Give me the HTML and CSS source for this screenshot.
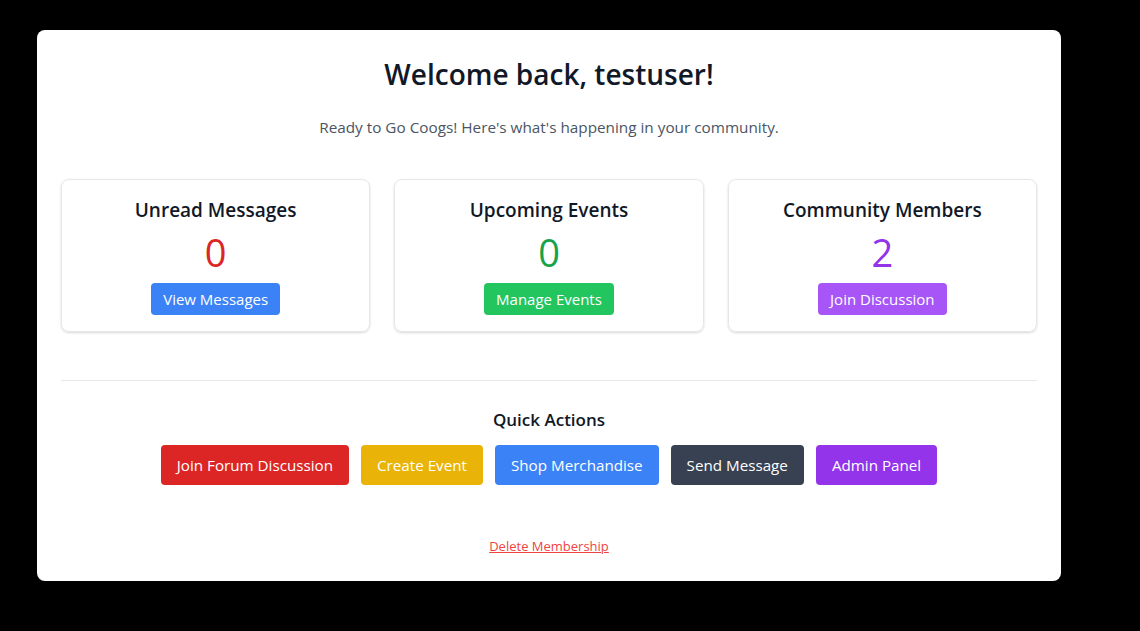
FILE: index.html
```html
<!DOCTYPE html>
<html lang="en">
<head>
<meta charset="utf-8">
<title>Dashboard</title>
<link rel="stylesheet" href="styles.css">
</head>
<body>
<div class="page">
  <main class="panel">
    <h1 class="title">Welcome back, testuser!</h1>
    <p class="subtitle">Ready to Go Coogs! Here's what's happening in your community.</p>

    <section class="stats">
      <div class="stat">
        <h2 class="stat-title">Unread Messages</h2>
        <div class="stat-num num-red">0</div>
        <a class="btn-sm bg-blue" href="#">View Messages</a>
      </div>
      <div class="stat">
        <h2 class="stat-title">Upcoming Events</h2>
        <div class="stat-num num-green">0</div>
        <a class="btn-sm bg-green" href="#">Manage Events</a>
      </div>
      <div class="stat">
        <h2 class="stat-title">Community Members</h2>
        <div class="stat-num num-purple">2</div>
        <a class="btn-sm bg-purple-light" href="#">Join Discussion</a>
      </div>
    </section>

    <section class="quick">
      <h3 class="quick-title">Quick Actions</h3>
      <div class="quick-row">
        <a class="btn bg-red" href="#">Join Forum Discussion</a>
        <a class="btn bg-yellow" href="#">Create Event</a>
        <a class="btn bg-blue" href="#">Shop Merchandise</a>
        <a class="btn bg-gray" href="#">Send Message</a>
        <a class="btn bg-purple" href="#">Admin Panel</a>
      </div>
    </section>

    <div class="delete-wrap">
      <a class="delete" href="#">Delete Membership</a>
    </div>
  </main>
</div>
</body>
</html>
```

FILE: styles.css
```css
* { box-sizing: border-box; }
html, body {
  margin: 0;
  padding: 0;
  background: #000;
  height: 100%;
}
body {
  font-family: "Open Sans", "Noto Sans", "Liberation Sans", sans-serif;
  color: #111827;
}
.page {
  padding: 30px 0 0 37px;
}
.panel {
  width: 1024px;
  background: #fff;
  border-radius: 8px;
  padding: 24px 24px 25px;
  text-align: center;
}
.title {
  margin: 2px 0 0;
  font-size: 28px;
  line-height: 36px;
  font-weight: 600;
  color: #111827;
}
.subtitle {
  margin: 23px 0 0;
  font-size: 15.3px;
  line-height: 24px;
  color: #4b5563;
}
.stats {
  margin-top: 40px;
  display: grid;
  grid-template-columns: repeat(3, 1fr);
  gap: 24px;
}
.stat {
  border: 1px solid #e5e7eb;
  border-radius: 8px;
  box-shadow: 0 1px 3px rgba(0,0,0,0.1), 0 1px 2px rgba(0,0,0,0.06);
  padding: 16px;
  display: flex;
  flex-direction: column;
  align-items: center;
}
.stat-title {
  margin: 0;
  font-size: 19px;
  line-height: 28px;
  font-weight: 600;
  color: #111827;
}
.stat-num {
  margin-top: 8px;
  font-size: 38px;
  line-height: 40px;
  font-weight: 400;
}
.num-red { color: #dc2626; }
.num-green { color: #16a34a; }
.num-purple { color: #9333ea; }
.btn-sm {
  margin-top: 11px;
  display: inline-block;
  padding: 4px 12px;
  border-radius: 4px;
  font-size: 15px;
  line-height: 24px;
  color: #fff;
  text-decoration: none;
}
.bg-blue { background: #3b82f6; }
.bg-green { background: #22c55e; }
.bg-purple-light { background: #a855f7; }
.bg-red { background: #dc2626; }
.bg-yellow { background: #eab308; }
.bg-gray { background: #374151; }
.bg-purple { background: #9333ea; }
.quick {
  margin-top: 48px;
  border-top: 1px solid #e5e7eb;
  padding-top: 25px;
}
.quick-title {
  margin: 0;
  font-size: 17px;
  line-height: 28px;
  font-weight: 600;
  color: #111827;
}
.quick-row {
  margin-top: 11px;
  display: flex;
  justify-content: center;
  gap: 12px;
}
.btn {
  display: inline-block;
  padding: 8px 16px;
  border-radius: 4px;
  font-size: 15.2px;
  line-height: 24px;
  color: #fff;
  text-decoration: none;
}
.delete-wrap {
  margin-top: 50px;
  line-height: 20px;
}
.delete {
  font-size: 13px;
  line-height: 20px;
  color: #ef4444;
  text-decoration: underline;
}
```
